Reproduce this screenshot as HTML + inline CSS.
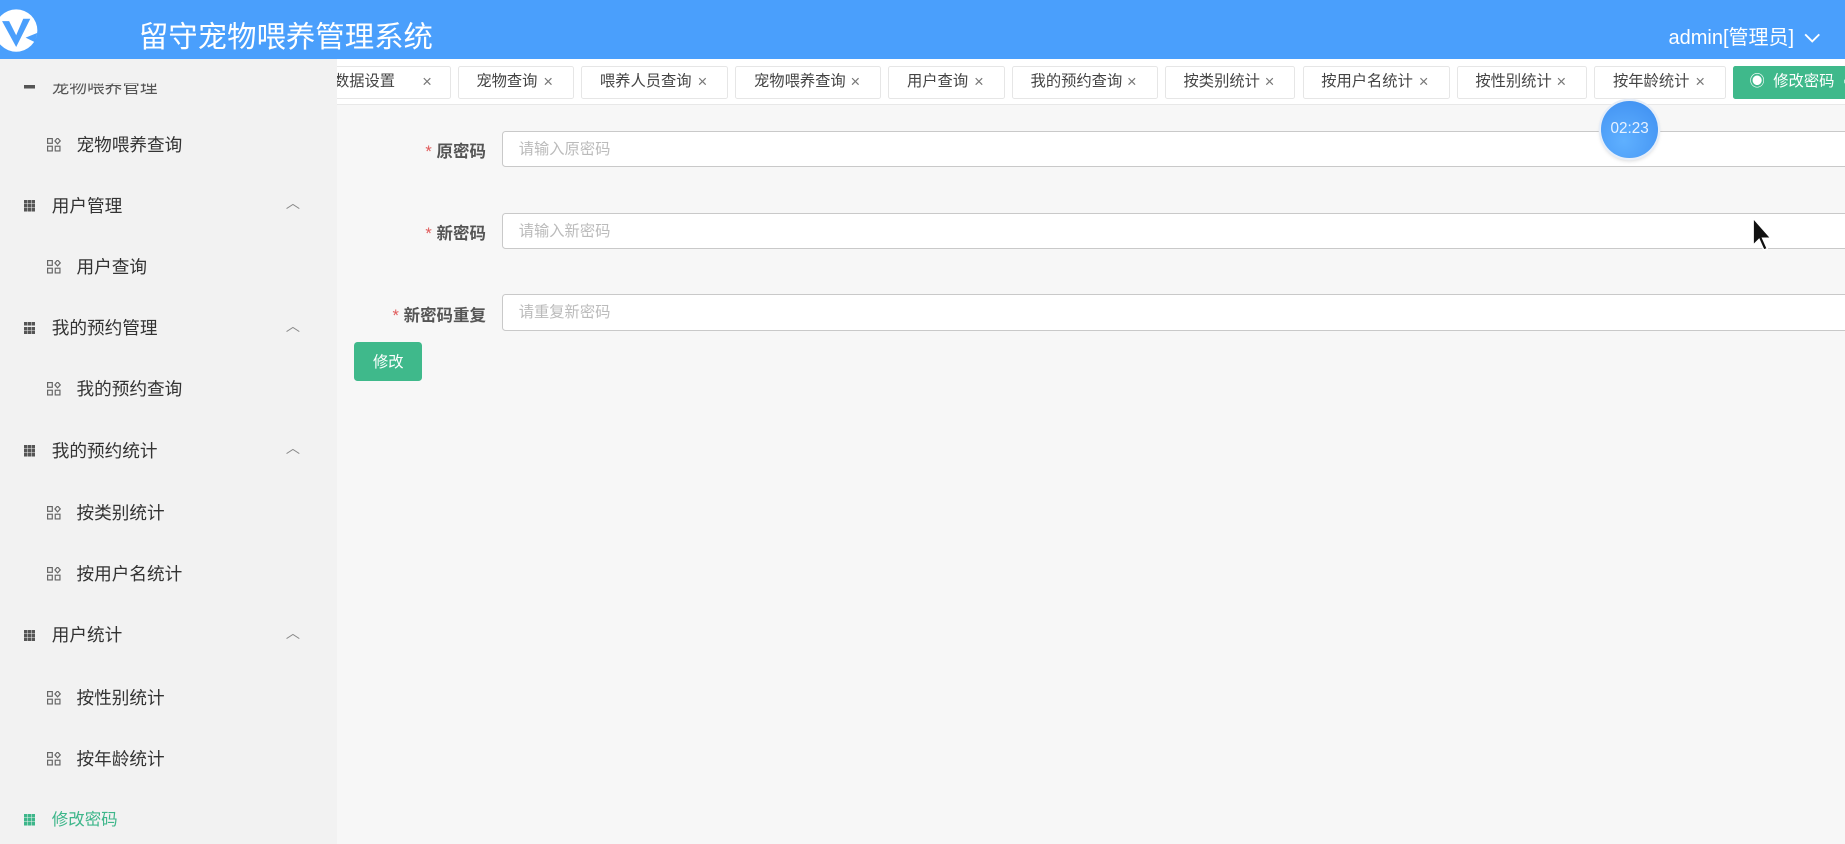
<!DOCTYPE html>
<html><head><meta charset="utf-8"><style>
html,body{margin:0;padding:0;overflow:hidden;}
body{width:1845px;height:844px;background:#f7f7f7;font-family:"Liberation Sans","Noto Sans CJK SC",sans-serif;}
#w{zoom:1.17666;width:1568px;height:717px;position:relative;overflow:hidden;background:#f7f7f7;}
.hd{position:absolute;left:0;top:0;width:1568px;height:50px;background:#4a9ffc;}
.title{position:absolute;left:118px;top:15px;color:#fff;font-size:25px;line-height:34px;}
.user{position:absolute;left:1418px;top:20px;color:#fff;font-size:17px;line-height:24px;}
.sb{position:absolute;left:0;top:50px;width:286px;height:667px;background:#f2f2f2;overflow:hidden;}
.it{position:absolute;left:0;height:24px;font-size:15px;color:#333;line-height:24px;white-space:nowrap;}
.g{position:absolute;left:20px;top:7px;width:10px;height:10px;background:
linear-gradient(#555 0 0) 0 0/3px 3px,linear-gradient(#555 0 0) 3.5px 0/3px 3px,linear-gradient(#555 0 0) 7px 0/3px 3px,
linear-gradient(#555 0 0) 0 3.5px/3px 3px,linear-gradient(#555 0 0) 3.5px 3.5px/3px 3px,linear-gradient(#555 0 0) 7px 3.5px/3px 3px,
linear-gradient(#555 0 0) 0 7px/3px 3px,linear-gradient(#555 0 0) 3.5px 7px/3px 3px,linear-gradient(#555 0 0) 7px 7px/3px 3px;background-repeat:no-repeat;}
.gr .g{background:
linear-gradient(#3db68a 0 0) 0 0/3px 3px,linear-gradient(#3db68a 0 0) 3.5px 0/3px 3px,linear-gradient(#3db68a 0 0) 7px 0/3px 3px,
linear-gradient(#3db68a 0 0) 0 3.5px/3px 3px,linear-gradient(#3db68a 0 0) 3.5px 3.5px/3px 3px,linear-gradient(#3db68a 0 0) 7px 3.5px/3px 3px,
linear-gradient(#3db68a 0 0) 0 7px/3px 3px,linear-gradient(#3db68a 0 0) 3.5px 7px/3px 3px,linear-gradient(#3db68a 0 0) 7px 7px/3px 3px;background-repeat:no-repeat;}
.it .t1{position:absolute;left:44px;}
.it .t2{position:absolute;left:65px;}
.sq{position:absolute;left:40px;top:6px;width:12px;height:12px;}
.car{position:absolute;left:243px;top:-2px;color:#888;font-size:12px;}
.tb{position:absolute;left:286px;top:50px;width:1282px;height:38px;background:#fff;border-bottom:1px solid #e8e8e8;overflow:hidden;}
.tab{position:absolute;top:6px;border:1px solid #e6e6e6;border-radius:2px;background:#fff;font-size:13px;color:#444;line-height:26px;box-sizing:border-box;height:28px;white-space:nowrap;}
.tab span{position:absolute;font-size:14px;color:#777;}
.lbl{position:absolute;right:1155px;font-size:14px;font-weight:bold;color:#555;text-align:right;white-space:nowrap;}
.lbl b{color:#e05a5a;font-weight:normal;margin-right:4px;}
.in{position:absolute;left:427px;width:1160px;height:31px;box-sizing:border-box;border:1px solid #c9c9c9;border-radius:3px;background:#fff;font-size:13px;color:#bbb;line-height:31px;padding-left:13px;}
.btn{position:absolute;left:301px;top:291px;width:58px;height:33px;background:#3fb98b;border-radius:3px;color:#fff;font-size:13px;line-height:35px;text-align:center;}
.tm{position:absolute;left:1361px;top:86px;width:48px;height:48px;border-radius:50%;background:radial-gradient(circle at 40% 70%,#5fb0ff,#3d8df0);box-shadow:0 0 0 2px #e7eef8,0 2px 4px rgba(0,0,0,.2);color:#e8f2ff;font-size:13px;line-height:48px;text-align:center;}
</style></head><body><div id="w">
<div class="hd">
<svg style="position:absolute;left:-4px;top:6px" width="40" height="40" viewBox="0 0 40 40"><circle cx="18" cy="20" r="18" fill="#fff"/><path d="M6 12 L18 34 L30 10 L24 10 L18 24 L12 12Z" fill="#4a9ffc"/><path d="M26 26 L36 22 L34 30Z" fill="#4a9ffc"/></svg>
<div class="title">留守宠物喂养管理系统</div>
<div class="user">admin[管理员] <svg width="14" height="10" style="margin-left:4px" viewBox="0 0 14 10"><path d="M1 2 L7 8 L13 2" stroke="#fff" stroke-width="1.6" fill="none"/></svg></div>
</div>
<div class="sb">
<div class="it" style="top:14px;color:#555;"><div class="g" style="top:8px;height:4px;background:linear-gradient(#555 0 0) 0 0/10px 3px no-repeat"></div><span class="t1" style="top:-2px;clip-path:inset(9px 0 0 0)">宠物喂养管理</span></div>
<div class="it" style="top:61px;"><svg class="sq" viewBox="0 0 12 12"><g fill="none" stroke="#666" stroke-width="1"><rect x="0.5" y="0.5" width="4" height="4"/><rect x="0.5" y="7" width="4" height="4"/><rect x="7" y="7" width="4" height="4"/><path d="M9 0 L11.3 2.5 L9 5 L6.7 2.5Z"/></g></svg><span class="t2">宠物喂养查询</span></div>
<div class="it" style="top:113px;"><div class="g"></div><span class="t1">用户管理</span><span class="car">︿</span></div>
<div class="it" style="top:165px;"><svg class="sq" viewBox="0 0 12 12"><g fill="none" stroke="#666" stroke-width="1"><rect x="0.5" y="0.5" width="4" height="4"/><rect x="0.5" y="7" width="4" height="4"/><rect x="7" y="7" width="4" height="4"/><path d="M9 0 L11.3 2.5 L9 5 L6.7 2.5Z"/></g></svg><span class="t2">用户查询</span></div>
<div class="it" style="top:217px;"><div class="g"></div><span class="t1">我的预约管理</span><span class="car">︿</span></div>
<div class="it" style="top:269px;"><svg class="sq" viewBox="0 0 12 12"><g fill="none" stroke="#666" stroke-width="1"><rect x="0.5" y="0.5" width="4" height="4"/><rect x="0.5" y="7" width="4" height="4"/><rect x="7" y="7" width="4" height="4"/><path d="M9 0 L11.3 2.5 L9 5 L6.7 2.5Z"/></g></svg><span class="t2">我的预约查询</span></div>
<div class="it" style="top:321px;"><div class="g"></div><span class="t1">我的预约统计</span><span class="car">︿</span></div>
<div class="it" style="top:374px;"><svg class="sq" viewBox="0 0 12 12"><g fill="none" stroke="#666" stroke-width="1"><rect x="0.5" y="0.5" width="4" height="4"/><rect x="0.5" y="7" width="4" height="4"/><rect x="7" y="7" width="4" height="4"/><path d="M9 0 L11.3 2.5 L9 5 L6.7 2.5Z"/></g></svg><span class="t2">按类别统计</span></div>
<div class="it" style="top:426px;"><svg class="sq" viewBox="0 0 12 12"><g fill="none" stroke="#666" stroke-width="1"><rect x="0.5" y="0.5" width="4" height="4"/><rect x="0.5" y="7" width="4" height="4"/><rect x="7" y="7" width="4" height="4"/><path d="M9 0 L11.3 2.5 L9 5 L6.7 2.5Z"/></g></svg><span class="t2">按用户名统计</span></div>
<div class="it" style="top:478px;"><div class="g"></div><span class="t1">用户统计</span><span class="car">︿</span></div>
<div class="it" style="top:531px;"><svg class="sq" viewBox="0 0 12 12"><g fill="none" stroke="#666" stroke-width="1"><rect x="0.5" y="0.5" width="4" height="4"/><rect x="0.5" y="7" width="4" height="4"/><rect x="7" y="7" width="4" height="4"/><path d="M9 0 L11.3 2.5 L9 5 L6.7 2.5Z"/></g></svg><span class="t2">按性别统计</span></div>
<div class="it" style="top:583px;"><svg class="sq" viewBox="0 0 12 12"><g fill="none" stroke="#666" stroke-width="1"><rect x="0.5" y="0.5" width="4" height="4"/><rect x="0.5" y="7" width="4" height="4"/><rect x="7" y="7" width="4" height="4"/><path d="M9 0 L11.3 2.5 L9 5 L6.7 2.5Z"/></g></svg><span class="t2">按年龄统计</span></div>
<div class="it gr" style="top:635px;color:#3db68a;font-size:14px"><div class="g"></div><span class="t1">修改密码</span></div>
</div>
<div class="tb">
<div class="tab" style="left:-30px;width:127px;padding-left:14px;">询数据设置<span style="left:102px">×</span></div>
<div class="tab" style="left:103px;width:99px;padding-left:15px;">宠物查询<span style="left:72px">×</span></div>
<div class="tab" style="left:208px;width:125px;padding-left:15px;">喂养人员查询<span style="left:98px">×</span></div>
<div class="tab" style="left:339px;width:124px;padding-left:15px;">宠物喂养查询<span style="left:97px">×</span></div>
<div class="tab" style="left:469px;width:99px;padding-left:15px;">用户查询<span style="left:72px">×</span></div>
<div class="tab" style="left:574px;width:124px;padding-left:15px;">我的预约查询<span style="left:97px">×</span></div>
<div class="tab" style="left:704px;width:111px;padding-left:15px;">按类别统计<span style="left:84px">×</span></div>
<div class="tab" style="left:821px;width:125px;padding-left:15px;">按用户名统计<span style="left:98px">×</span></div>
<div class="tab" style="left:952px;width:111px;padding-left:15px;">按性别统计<span style="left:84px">×</span></div>
<div class="tab" style="left:1069px;width:112px;padding-left:15px;">按年龄统计<span style="left:85px">×</span></div>
<div class="tab" style="left:1187px;width:110px;padding-left:13px;background:#3fb98b;border-color:#3fb98b;color:#fff;">◉ &nbsp;修改密码 &nbsp;○</div>
</div>
<div class="lbl" style="top:117px"><b>*</b>原密码</div>
<div class="in" style="top:111px">请输入原密码</div>
<div class="lbl" style="top:187px"><b>*</b>新密码</div>
<div class="in" style="top:181px">请输入新密码</div>
<div class="lbl" style="top:257px"><b>*</b>新密码重复</div>
<div class="in" style="top:250px">请重复新密码</div>
<div class="btn">修改</div>
<div class="tm">02:23</div>
<svg style="position:absolute;left:1489px;top:184px" width="22" height="30" viewBox="0 0 22 30"><path d="M1 1 L1 24 L6 19 L10 28 L13 27 L9 18 L16 18Z" fill="#111" stroke="#fff" stroke-width="1.2"/></svg>
</div></body></html>
